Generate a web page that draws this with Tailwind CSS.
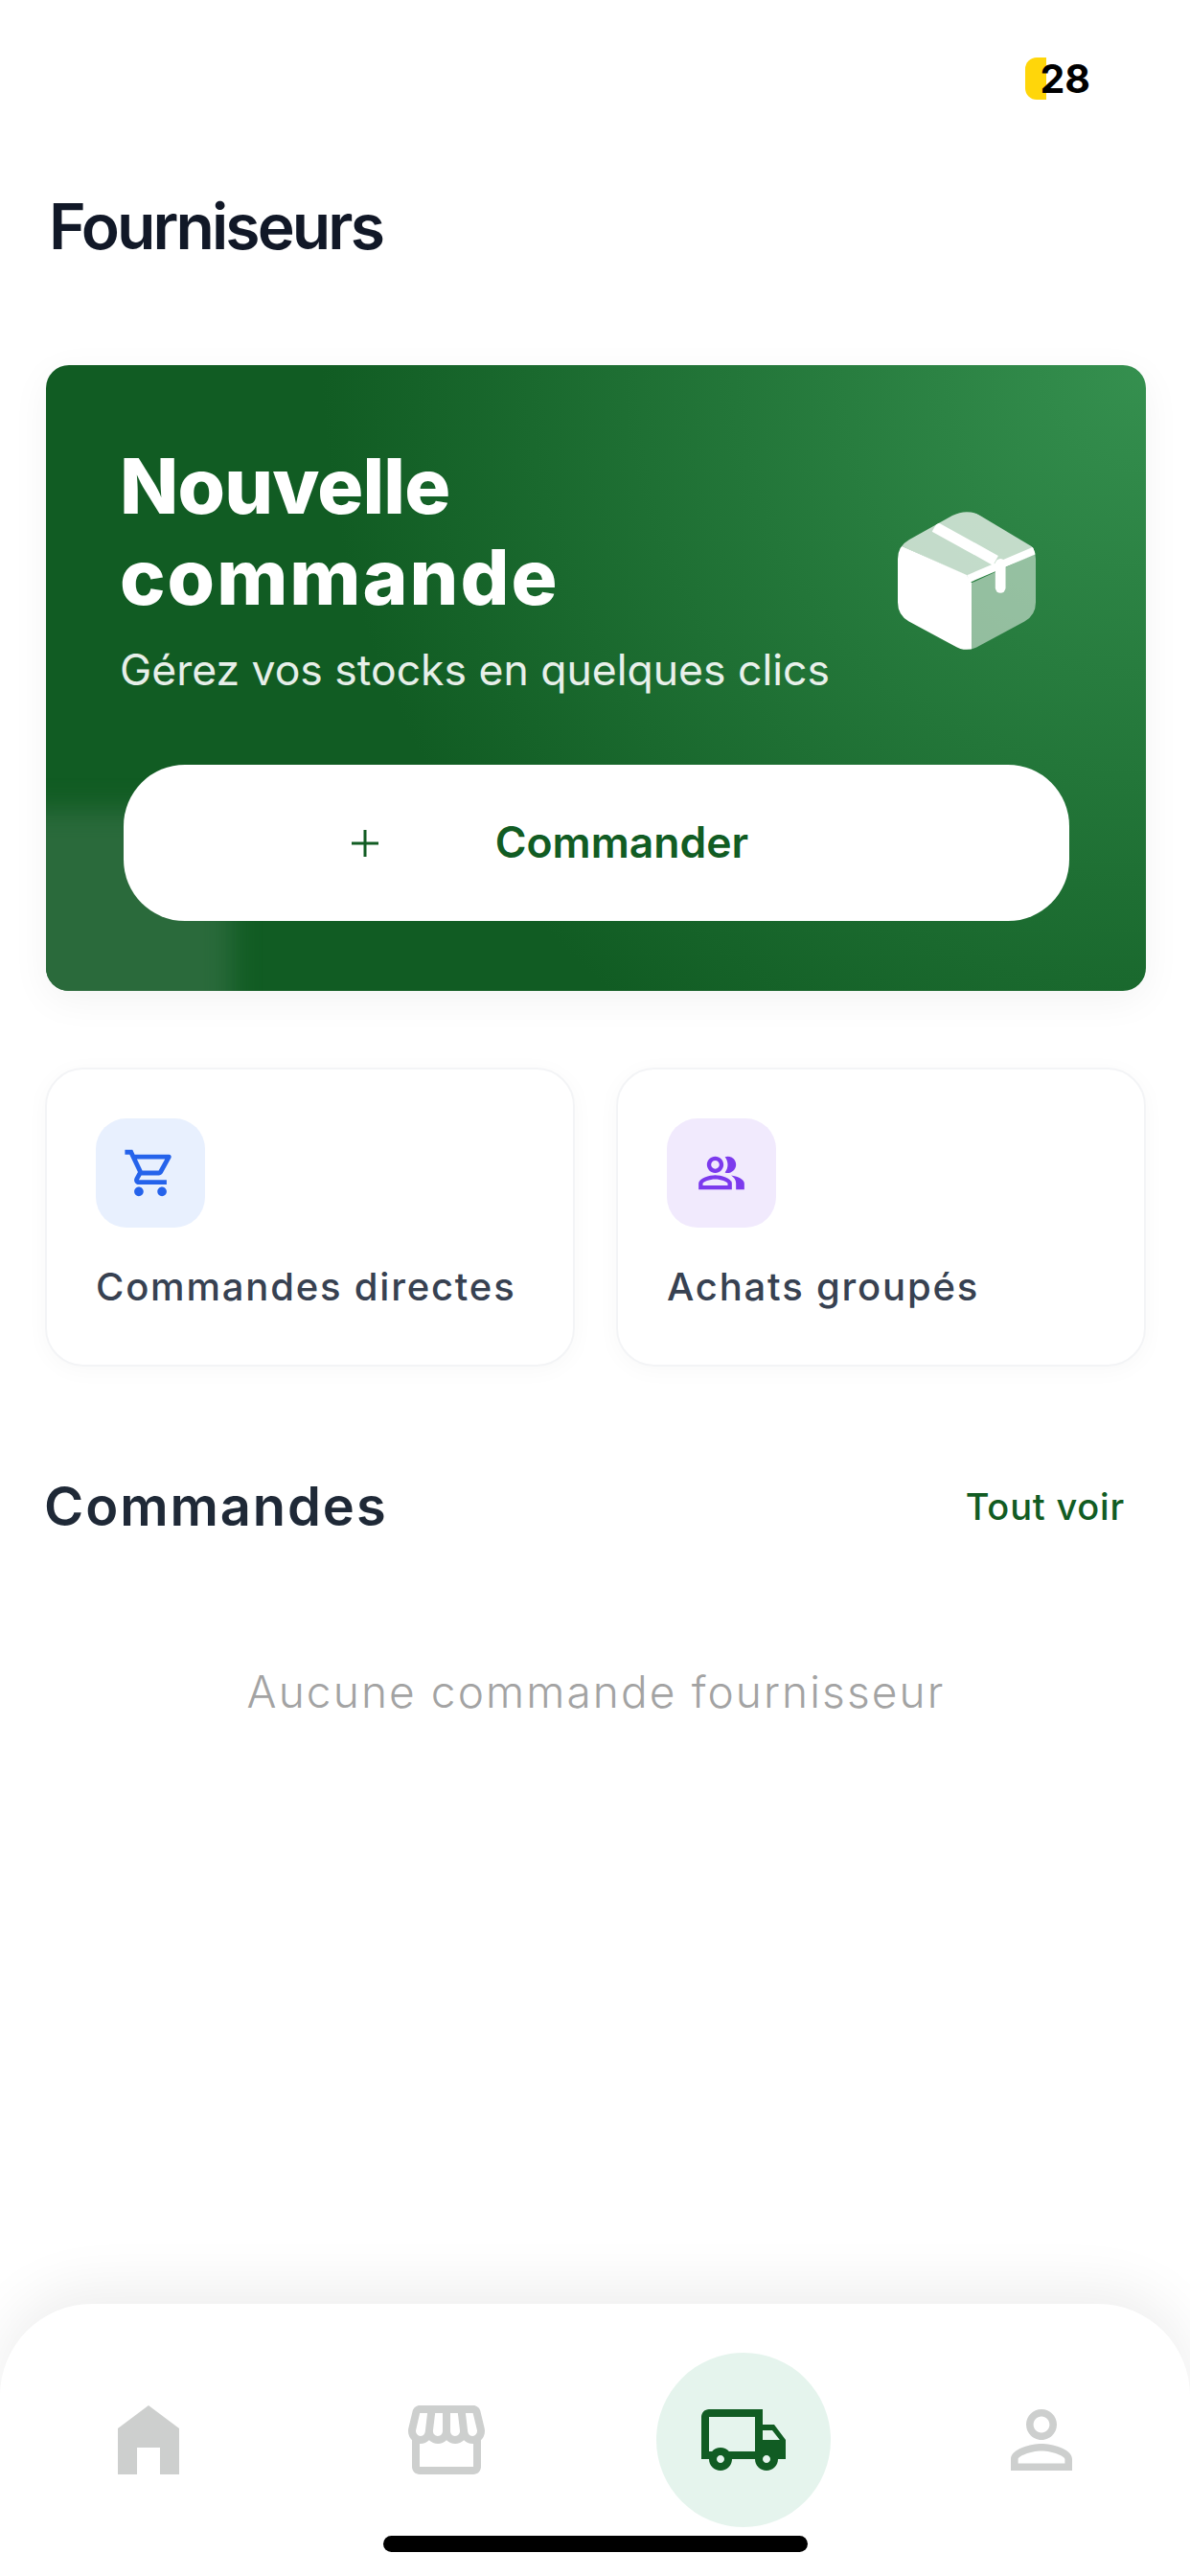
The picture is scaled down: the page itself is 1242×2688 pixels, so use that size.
<!DOCTYPE html>
<html lang="fr">
<head>
  <meta charset="UTF-8">
  <title>Fournisseurs</title>
  <script src="https://cdn.jsdelivr.net/npm/@tailwindcss/browser@4"></script>
</head>
<body class="bg-white font-['Inter',sans-serif]">
  <div class="w-[1242px] h-[2688px] flex flex-col overflow-hidden relative bg-white">

    <!-- status bar -->
    <div class="h-[104px] pt-[60px] pr-[104px] flex justify-end items-start shrink-0">
      <div class="w-[22px] h-[44px] bg-[#ffd60a] rounded-l-[12px]"></div>
      <span class="-ml-[7px] h-[44px] leading-[44px] text-[41px] font-bold text-black">28</span>
    </div>

    <main class="flex-1 pl-[48px] pr-[46px]">
      <h1 class="mt-[96px] ml-[3px] h-[72px] leading-[72px] text-[66px] font-semibold tracking-[-2.9px] text-[#111827]">Fourniseurs</h1>

      <!-- hero -->
      <section class="mt-[109px] relative h-[653px] rounded-[24px] overflow-hidden bg-[radial-gradient(circle_at_100%_0,#35904f_0,#115c23_860px)] shadow-[0_10px_40px_rgba(0,0,0,0.05)]">
        <div class="absolute -left-[40px] -bottom-[40px] w-[234px] h-[229px] rounded-[20px] bg-[#2a6a3b] blur-[14px]"></div>
        <div class="relative pt-[78px] pl-[77px]">
          <div class="flex justify-between items-start pr-[115px]">
            <div>
              <h2 class="text-[80px] leading-[95px] font-extrabold text-white"><span class="tracking-[-0.8px]">Nouvelle</span><br><span class="tracking-[2px]">commande</span></h2>
              <p class="mt-[22px] text-[44.5px] leading-[56px] text-white/90">Gérez vos stocks en quelques clics</p>
            </div>
            <svg class="w-[144px] h-[144px] mt-[75px]" viewBox="170 103 430 430">
              <defs>
                <clipPath id="boxClip">
                  <path d="M340 115Q385 92 430 115L565 190Q600 210 600 250V385Q600 425 565 445L425 520Q385 545 345 520L205 445Q170 425 170 385V250Q170 210 205 190Z"/>
                </clipPath>
              </defs>
              <g clip-path="url(#boxClip)">
                <polygon points="160,200 385,90 610,225 385,302" fill="#fff" fill-opacity="0.72"/>
                <polygon points="400,325 610,228 610,545 400,545" fill="#fff" fill-opacity="0.5"/>
                <polygon points="160,200 385,300 400,325 400,545 160,545" fill="#fff"/>
                <path d="M285 150L475 255" stroke="#fff" stroke-width="34" fill="none"/>
                <path d="M390 312L600 222" stroke="#fff" stroke-width="24" fill="none"/>
                <path d="M490 265V340" stroke="#fff" stroke-width="32" stroke-linecap="round" fill="none"/>
              </g>
            </svg>
          </div>
        </div>
        <button class="absolute left-[81px] top-[417px] w-[987px] h-[163px] rounded-[64px] bg-white flex items-center justify-center gap-[122px] text-[#115c23] pr-[97px]">
          <svg class="w-[28px] h-[28px]" viewBox="0 0 28 28"><path d="M14 0V28M0 14H28" stroke="#115c23" stroke-width="3"/></svg>
          <span class="text-[44.5px] font-semibold leading-none">Commander</span>
        </button>
      </section>

      <!-- quick links -->
      <div class="mt-[80px] -ml-[1px] grid grid-cols-2 gap-[43px]">
        <div class="h-[312px] rounded-[40px] bg-white border-2 border-[#f3f4f6] p-[51px] shadow-[0_4px_24px_rgba(0,0,0,0.03)]">
          <div class="w-[114px] h-[114px] rounded-[32px] bg-[#e8f0fe] flex items-center justify-center">
            <svg class="w-[58px] h-[58px]" viewBox="0 0 24 24" fill="#2563eb"><path d="M15.55 13c.75 0 1.41-.41 1.75-1.03l3.58-6.49c.37-.66-.11-1.48-.87-1.48H5.21l-.94-2H1v2h2l3.6 7.59-1.35 2.44C4.52 15.37 5.48 17 7 17h12v-2H7l1.1-2h7.45zM6.16 6h12.15l-2.76 5H8.53L6.16 6zM7 18c-1.1 0-1.99.9-1.99 2S5.9 22 7 22s2-.9 2-2-.9-2-2-2zm10 0c-1.1 0-1.99.9-1.99 2s.89 2 1.99 2 2-.9 2-2-.9-2-2-2z"/></svg>
          </div>
          <p class="mt-[37px] text-[40px] leading-[50px] tracking-[1.8px] text-[#374151] whitespace-nowrap font-[450]">Commandes directes</p>
        </div>
        <div class="h-[312px] rounded-[40px] bg-white border-2 border-[#f3f4f6] p-[51px] shadow-[0_4px_24px_rgba(0,0,0,0.03)]">
          <div class="w-[114px] h-[114px] rounded-[32px] bg-[#f1eafd] flex items-center justify-center">
            <svg class="w-[52px] h-[52px]" viewBox="0 0 24 24" fill="#7c3aed"><path d="M16.67 13.13C18.04 14.06 19 15.32 19 17v3h4v-3c0-2.18-3.57-3.47-6.33-3.87z"/><path d="M15 12c2.21 0 4-1.79 4-4s-1.79-4-4-4c-.47 0-.91.1-1.33.24C14.5 5.27 15 6.58 15 8s-.5 2.73-1.33 3.76c.42.14.86.24 1.33.24z"/><path d="M9 12c2.21 0 4-1.79 4-4s-1.79-4-4-4-4 1.79-4 4 1.79 4 4 4zm0-6c1.1 0 2 .9 2 2s-.9 2-2 2-2-.9-2-2 .9-2 2-2z"/><path d="M9 13c-2.67 0-8 1.34-8 4v3h16v-3c0-2.66-5.33-4-8-4zm6 5H3v-.99C3.2 16.29 6.3 15 9 15s5.8 1.29 6 2v1z"/></svg>
          </div>
          <p class="mt-[37px] text-[40px] leading-[50px] tracking-[1.8px] text-[#374151] whitespace-nowrap font-[450]">Achats groupés</p>
        </div>
      </div>

      <!-- orders -->
      <div class="mt-[114px] flex justify-between items-center -ml-[2px] pr-[22px]">
        <h2 class="text-[56px] leading-[64px] font-semibold tracking-[1.9px] text-[#1f2937]">Commandes</h2>
        <a class="text-[38px] font-medium tracking-[0.8px] text-[#115c23]">Tout voir</a>
      </div>
      <p class="mt-[133px] text-center text-[46px] leading-[56px] font-light tracking-[2.1px] text-[#a3a3a3]">Aucune commande fournisseur</p>
    </main>

    <!-- bottom nav -->
    <nav class="h-[284px] shrink-0 rounded-t-[96px] bg-white shadow-[0_-16px_60px_rgba(0,0,0,0.07)] grid grid-cols-4 pt-[51px] relative">
      <div class="flex justify-center items-start">
        <div class="w-[182px] h-[182px] flex items-center justify-center">
          <svg class="w-[96px] h-[96px]" viewBox="0 0 24 24" fill="#cdcfce"><path d="M4 21V9l8-6 8 6v12h-5v-7H9v7H4z"/></svg>
        </div>
      </div>
      <div class="flex justify-center items-start">
        <div class="w-[182px] h-[182px] flex items-center justify-center">
          <svg class="w-[96px] h-[96px]" viewBox="0 0 24 24" fill="#cdcfce"><path d="M21.9 8.89l-1.05-4.37c-.22-.9-1-1.52-1.91-1.52H5.05c-.9 0-1.69.63-1.9 1.52L2.1 8.89c-.24 1.02-.02 2.06.62 2.88.08.11.19.19.28.29V19c0 1.1.9 2 2 2h14c1.1 0 2-.9 2-2v-6.94c.09-.09.2-.18.28-.28.64-.82.87-1.87.62-2.89zm-2.99-3.9l1.05 4.37c.1.42.01.84-.25 1.17-.14.18-.44.47-.94.47-.61 0-1.14-.49-1.21-1.14L16.98 5l1.93-.01zM13 5h1.96l.54 4.52c.05.39-.07.78-.33 1.07-.22.26-.54.41-.95.41-.67 0-1.22-.59-1.22-1.31V5zM8.49 9.52L9.04 5H11v4.69c0 .72-.55 1.31-1.29 1.31-.34 0-.65-.15-.89-.41-.25-.29-.37-.68-.33-1.07zm-4.45-.16L5.05 5h1.97l-.58 4.86c-.08.65-.6 1.14-1.21 1.14-.49 0-.8-.29-.93-.47-.27-.32-.36-.75-.26-1.17zM5 19v-6.03c.08.01.15.03.23.03.87 0 1.66-.36 2.24-.95.6.6 1.4.95 2.31.95.87 0 1.65-.36 2.23-.93.59.57 1.39.93 2.29.93.84 0 1.64-.35 2.24-.95.58.59 1.37.95 2.24.95.08 0 .15-.02.23-.03V19H5z"/></svg>
        </div>
      </div>
      <div class="flex justify-center items-start">
        <div class="w-[182px] h-[182px] rounded-full bg-[#e5f4ed] flex items-center justify-center">
          <svg class="w-[96px] h-[96px]" viewBox="0 0 24 24" fill="#115c23"><path d="M20 8h-3V4H3c-1.1 0-2 .9-2 2v11h2c0 1.66 1.34 3 3 3s3-1.34 3-3h6c0 1.66 1.34 3 3 3s3-1.34 3-3h2v-5l-3-4zm-.5 1.5l1.96 2.5H17V9.5h2.5zM6 18c-.55 0-1-.45-1-1s.45-1 1-1 1 .45 1 1-.45 1-1 1zm2.22-3c-.55-.61-1.33-1-2.22-1s-1.67.39-2.22 1H3V6h12v9H8.22zM18 18c-.55 0-1-.45-1-1s.45-1 1-1 1 .45 1 1-.45 1-1 1z"/></svg>
        </div>
      </div>
      <div class="flex justify-center items-start">
        <div class="w-[182px] h-[182px] flex items-center justify-center">
          <svg class="w-[96px] h-[96px]" viewBox="0 0 24 24" fill="#cdcfce"><path d="M12 5.9c1.16 0 2.1.94 2.1 2.1s-.94 2.1-2.1 2.1S9.9 9.16 9.9 8s.94-2.1 2.1-2.1m0 9c2.97 0 6.1 1.46 6.1 2.1v1.1H5.9V17c0-.64 3.13-2.1 6.1-2.1M12 4C9.79 4 8 5.79 8 8s1.79 4 4 4 4-1.79 4-4-1.79-4-4-4zm0 9c-2.67 0-8 1.34-8 4v3h16v-3c0-2.66-5.33-4-8-4z"/></svg>
        </div>
      </div>
      <!-- home indicator -->
      <div class="absolute left-[400px] top-[242px] w-[443px] h-[17px] rounded-full bg-black"></div>
    </nav>
  </div>
</body>
</html>
